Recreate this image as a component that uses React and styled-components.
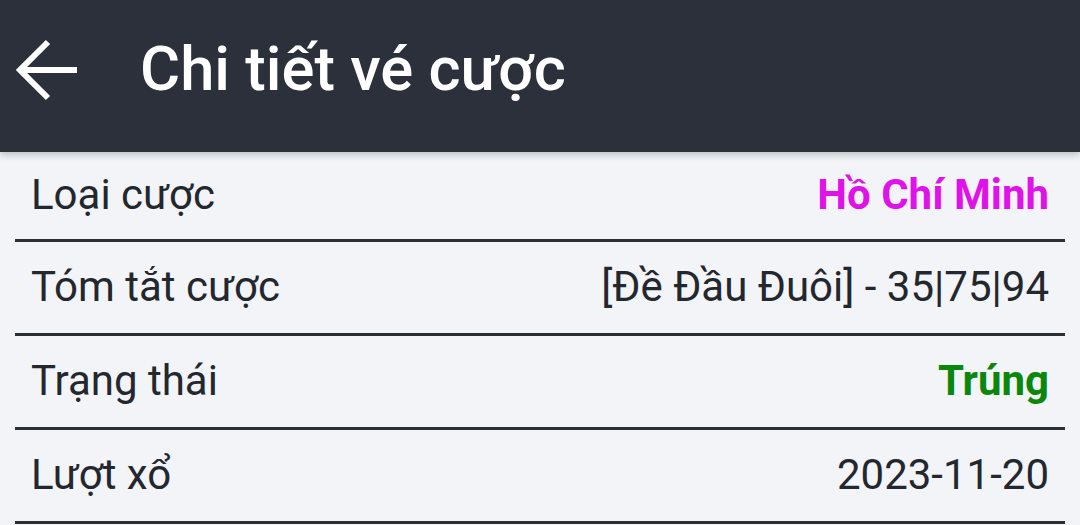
import React from 'react';
import styled, { createGlobalStyle } from "styled-components";

const GlobalStyle = createGlobalStyle`
    html, body {
        margin: 0;
        padding: 0;
        background: #f3f4f8;
        font-family: Roboto, "Noto Sans", sans-serif;
        overflow: hidden;
    }
`;

const rows = [
    { label: "Loại cược", value: "Hồ Chí Minh", tone: "pink" },
    { label: "Tóm tắt cược", value: "[Đề Đầu Đuôi] - 35|75|94" },
    { label: "Trạng thái", value: "Trúng", tone: "green" },
    { label: "Lượt xổ", value: "2023-11-20" },
];

function BackArrow() {
    return (
        <svg width="66" height="66" viewBox="0 0 66 66" fill="none" stroke="#ffffff" strokeWidth="6" strokeLinecap="butt">
            <path d="M63 33H6" />
            <path d="M34 5L6 33l28 28" />
        </svg>
    );
}

function App() {
    return (
        <Page>
            <GlobalStyle />
            <Header>
                <BackButton>
                    <BackArrow />
                </BackButton>
                <Title>Chi tiết vé cược</Title>
            </Header>
            <List>
                {rows.map((row) => (
                    <Row key={row.label}>
                        <Label>{row.label}</Label>
                        <Value $tone={row.tone}>{row.value}</Value>
                    </Row>
                ))}
            </List>
        </Page>
    );
}
export default App;

const Page = styled.div`
    width: 1080px;
    height: 525px;
    background: #f3f4f8;
`;
const Header = styled.header`
    position: relative;
    z-index: 2;
    height: 152px;
    box-sizing: border-box;
    padding-bottom: 12px;
    background: #2b303b;
    display: flex;
    align-items: center;
    box-shadow: 0 3px 7px rgba(0, 0, 0, 0.22);
`;
const BackButton = styled.button`
    border: none;
    background: none;
    padding: 0;
    margin-left: 14px;
    width: 66px;
    height: 66px;
    display: flex;
    align-items: center;
    justify-content: center;
    cursor: pointer;
`;
const Title = styled.h1`
    margin: 0 0 0 60px;
    color: #ffffff;
    font-size: 61.5px;
    font-weight: 500;
    line-height: 1.2;
`;
const List = styled.ul`
    list-style: none;
    margin: 0 15px;
    padding: 0;
`;
const Row = styled.li`
    height: 91px;
    box-sizing: content-box;
    display: flex;
    align-items: center;
    justify-content: space-between;
    padding: 0 16px 3px;
    border-bottom: 3px solid #2a2e35;
    &:first-child {
        height: 84px;
    }
    & + & {
        height: 88px;
    }
`;
const Label = styled.span`
    font-size: 42px;
    color: #23272e;
`;
const toneColor = {
    pink: "#e012ea",
    green: "#0b870b",
};
const Value = styled.span`
    font-size: 42px;
    color: ${(p) => toneColor[p.$tone] || "#23272e"};
    font-weight: ${(p) => (p.$tone ? 700 : 400)};
`;
